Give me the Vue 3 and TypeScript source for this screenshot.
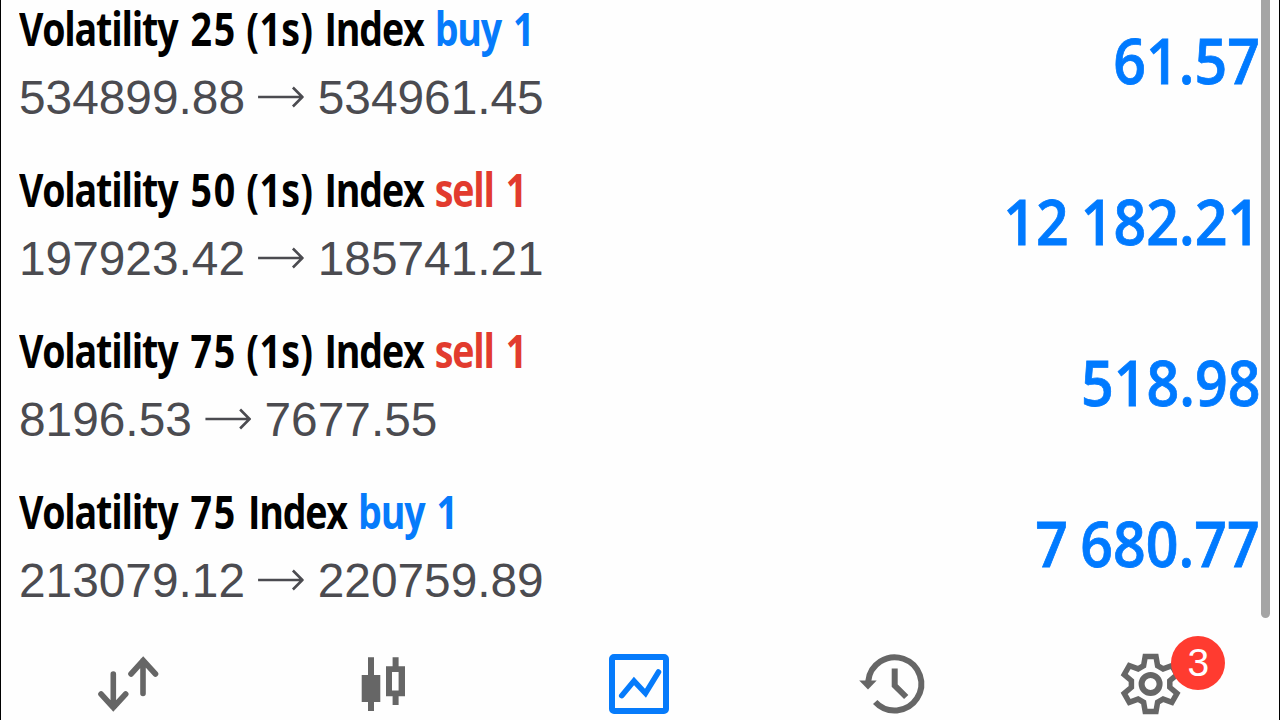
<script setup lang="ts">
interface Position {
  symbol: string
  side: 'buy' | 'sell'
  volume: number
  open: string
  current: string
  profit: string
}

const positions: Position[] = [
  { symbol: 'Volatility 25 (1s) Index', side: 'buy', volume: 1, open: '534899.88', current: '534961.45', profit: '61.57' },
  { symbol: 'Volatility 50 (1s) Index', side: 'sell', volume: 1, open: '197923.42', current: '185741.21', profit: '12 182.21' },
  { symbol: 'Volatility 75 (1s) Index', side: 'sell', volume: 1, open: '8196.53', current: '7677.55', profit: '518.98' },
  { symbol: 'Volatility 75 Index', side: 'buy', volume: 1, open: '213079.12', current: '220759.89', profit: '7 680.77' },
]
const unread = 3

function wordClass(word: string): string {
  if (word.startsWith('(')) return 'period'
  return /\d/.test(word) ? 'num' : 'word'
}
</script>

<template>
  <div class="screen">
    <main class="list">
      <article v-for="p in positions" :key="p.symbol" class="row">
        <div class="info">
          <div class="title">
            <span v-for="word in p.symbol.split(' ')" :key="word" :class="wordClass(word)">{{ word }}</span>
            <span class="side" :class="p.side">{{ p.side }}</span>
            <span :class="p.side">{{ p.volume }}</span>
          </div>
          <div class="prices">
            <span>{{ p.open }}</span>
            <svg class="arrow" width="46" height="24" viewBox="0 0 46 24">
              <path d="M0 12H44M35 2.500L44.500 12L35 21.500" />
            </svg>
            <span>{{ p.current }}</span>
          </div>
        </div>
        <div class="profit">{{ p.profit }}</div>
      </article>
    </main>
    <div class="scrollbar"></div>
    <nav class="tabs">
      <div class="tab">
        <svg width="100" height="80" viewBox="0 0 100 80">
          <path class="line" d="M33.300 34V67.500M21 54L33.300 67.500L45.700 54M63 53.500V20.500M51 34L63.200 20.500L75.500 34" />
        </svg>
      </div>
      <div class="tab">
        <svg width="100" height="80" viewBox="0 0 100 80">
          <path class="solid" d="M33 17.300h6v17.700h6.300v27H39v9h-6v-9h-6.300V35H33z" />
          <path class="solid" fill-rule="evenodd" d="M57.600 17.300h6v9h6.400v30h-6.400v8.700h-6v-8.700H51v-30h6.600zM57 32v18.500h6.600V32z" />
        </svg>
      </div>
      <div class="tab">
        <svg width="100" height="80" viewBox="1 0 100 80">
          <rect class="blue" x="22" y="17" width="54" height="54" rx="2" stroke-width="6" />
          <path class="blue" d="M31.700 55.700L44 41L55.500 53.300L68.500 32" stroke-width="5.500" stroke-linecap="round" />
        </svg>
      </div>
      <div class="tab">
        <svg width="100" height="80" viewBox="0.800 0.500 100 80">
          <path class="ring" d="M22 42A26.600 26.600 0 1 1 29 62.500" />
          <path class="solid" d="M13 41h17.500L21.800 50z" />
          <path class="ring" d="M48.500 29V46L60 57.500" />
        </svg>
      </div>
      <div class="tab">
        <svg width="100" height="80" viewBox="0.400 0 100 80">
          <path class="gear" d="M43.600 16.500H54.400L56 25.700L61.500 28.900L70.300 25.600L75.400 34.600L68.200 40.700V47.300L75.400 53.400L70.300 62.400L61.500 59.100L56 62.300L54.400 71.500H43.600L42 62.300L36.500 59.100L27.700 62.400L22.600 53.400L29.800 47.300V40.700L22.600 34.600L27.700 25.600L36.500 28.900L42 25.700Z" />
          <circle class="gear hub" cx="49" cy="44" r="9" />
        </svg>
        <span class="badge">{{ unread }}</span>
      </div>
    </nav>
  </div>
</template>

<style>
body { margin: 0; overflow: hidden; }
</style>

<style scoped>
.screen {
  position: relative;
  box-sizing: border-box;
  width: 1280px;
  height: 720px;
  display: flex;
  flex-direction: column;
  overflow: hidden;
  background: #fefefe;
  border-left: 1px solid #000;
  border-right: 1px solid #000;
}
.list { height: 640px; flex: none; padding: 0 19px 0 18px; }
.row {
  height: 161px;
  display: flex;
  justify-content: space-between;
  align-items: flex-start;
}
.title {
  height: 60px;
  line-height: 56px;
  width: max-content;
  display: flex;
  gap: 14px;
  font-family: "Open Sans", "Liberation Sans", sans-serif;
  font-weight: 700;
  font-size: 47px;
  letter-spacing: -1.5px;
  white-space: nowrap;
  color: #000;
  transform: scaleX(0.8);
  transform-origin: left;
}
.word:first-child { margin-right: 2.500px; }
.num { letter-spacing: 2px; }
.period { margin-left: -2px; letter-spacing: 0.400px; }
.side { margin-right: 1px; }
.buy { color: #067bfb; }
.sell { color: #e23b2e; }
.prices {
  height: 74px;
  display: flex;
  align-items: center;
  width: max-content;
  font-family: "Liberation Sans", sans-serif;
  font-size: 48px;
  color: #4b4b50;
  transform: scaleX(0.996);
  transform-origin: left;
}
.arrow { margin: 0 14px 0 13px; fill: none; stroke: #4b4b50; stroke-width: 2.600; }
.profit {
  height: 122px;
  line-height: 120px;
  font-family: "Open Sans", "Liberation Sans", sans-serif;
  font-weight: 600;
  font-size: 64px;
  word-spacing: -3px;
  white-space: nowrap;
  color: #007aff;
  -webkit-text-stroke: 0.8px #007aff;
  transform: scaleX(0.895);
  transform-origin: right;
}
.scrollbar {
  position: absolute;
  right: 9px;
  top: -10px;
  width: 9px;
  height: 628px;
  border-radius: 5px;
  background: #a5a5a5;
}
.tabs { height: 80px; flex: none; display: flex; padding-left: 1px; }
.tab { position: relative; width: 255.600px; flex: none; display: flex; justify-content: center; }
.tab svg { flex: none; }
.line { fill: none; stroke: #666; stroke-width: 5.600; stroke-linecap: round; }
.solid { fill: #666; }
.blue { fill: none; stroke: #067bfb; }
.ring { fill: none; stroke: #666; stroke-width: 6; }
.gear { fill: none; stroke: #666; stroke-width: 5.500; }
.hub { stroke-width: 6; }
.badge {
  position: absolute;
  left: 147px;
  top: -4px;
  width: 54px;
  height: 54px;
  border-radius: 50%;
  background: #ff3b30;
  color: #fff;
  font: 39px/54px "Liberation Sans", sans-serif;
  text-align: center;
}
</style>
